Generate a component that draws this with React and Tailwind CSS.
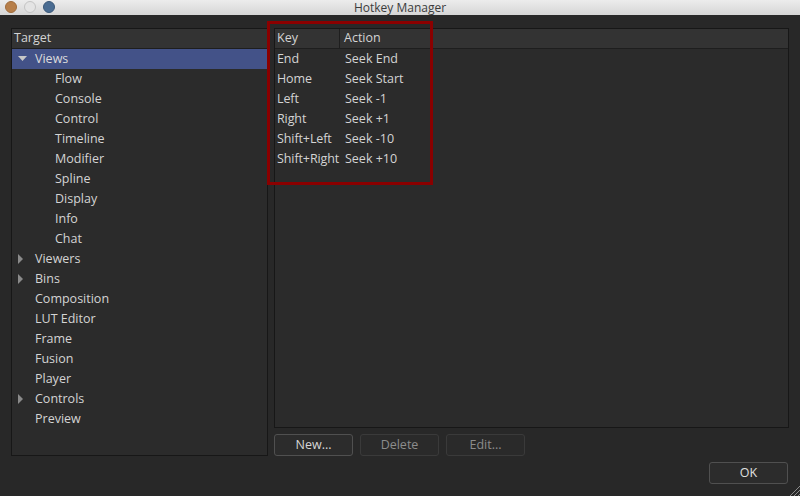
const views = ["Flow", "Console", "Control", "Timeline", "Modifier", "Spline", "Display", "Info", "Chat"];
const others = [
  { name: "Viewers", kids: true },
  { name: "Bins", kids: true },
  { name: "Composition" },
  { name: "LUT Editor" },
  { name: "Frame" },
  { name: "Fusion" },
  { name: "Player" },
  { name: "Controls", kids: true },
  { name: "Preview" },
];
const hotkeys = [
  ["End", "Seek End"],
  ["Home", "Seek Start"],
  ["Left", "Seek -1"],
  ["Right", "Seek +1"],
  ["Shift+Left", "Seek -10"],
  ["Shift+Right", "Seek +10"],
];

function Arrow({ open }) {
  if (open)
    return (
      <svg width="9" height="6" viewBox="0 0 9 6" className="shrink-0">
        <path d="M0 0 L9 0 L4.5 5 Z" fill="#c8c8c8" />
      </svg>
    );
  return (
    <svg width="6" height="10" viewBox="0 0 6 10" className="shrink-0">
      <path d="M0 0 L5 5 L0 10 Z" fill="#8a8a8a" />
    </svg>
  );
}

export default function App() {
  return (
    <div
      className="w-[800px] h-[496px] flex flex-col bg-[#282828] text-[12.5px] text-[#d4d4d4] overflow-hidden"
      style={{ fontFamily: '"Open Sans", "Noto Sans", sans-serif' }}
    >
      {/* title bar */}
      <div className="relative h-[15px] shrink-0 bg-gradient-to-b from-[#ececec] to-[#d6d6d6] flex items-center justify-center">
        <div className="absolute left-[5px] top-[1px] flex gap-[7px]">
          <span className="w-[12px] h-[12px] rounded-full bg-[#b77f4a] border border-[#a06c3c]" />
          <span className="w-[12px] h-[12px] rounded-full bg-[#e4e4e4] border border-[#c4c4c4]" />
          <span className="w-[12px] h-[12px] rounded-full bg-[#4a6c92] border border-[#3b5878]" />
        </div>
        <span className="text-[12px] leading-none text-[#3c3c3c]">Hotkey Manager</span>
      </div>

      {/* body */}
      <div className="flex-1 flex flex-col pt-[13px] px-[11px] pb-[11px]">
        <div className="flex gap-[6px] h-[428px]">
          {/* tree */}
          <div className="w-[257px] border border-[#171717] bg-[#2b2b2b] flex flex-col">
            <div className="h-[20px] flex items-center px-[2px] bg-[#333333] border-b border-[#1e1e1e]">Target</div>
            <div className="h-[20px] flex items-center bg-[#435288] text-[#dcdcdc]">
              <div className="w-[18px] flex justify-end pr-[3px]">
                <Arrow open />
              </div>
              <span className="pl-[5px]">Views</span>
            </div>
            {views.map((v) => (
              <div key={v} className="h-[20px] flex items-center pl-[43px]">
                {v}
              </div>
            ))}
            {others.map((o) => (
              <div key={o.name} className="h-[20px] flex items-center">
                <div className="w-[23px] flex justify-start pl-[6px]">{o.kids && <Arrow />}</div>
                <span>{o.name}</span>
              </div>
            ))}
          </div>

          {/* hotkey list */}
          <div className="flex-1 flex flex-col gap-[6px]">
            <div className="relative flex-1 border border-[#171717] bg-[#2b2b2b]">
              <div className="flex h-[20px] bg-[#333333] border-b border-[#1e1e1e]">
                <div className="w-[65px] border-r border-[#1e1e1e] flex items-center px-[2px]">Key</div>
                <div className="flex items-center px-[4px]">Action</div>
              </div>
              {hotkeys.map(([k, a]) => (
                <div key={k} className="flex h-[20px] items-center">
                  <span className="w-[67px] px-[2px] tracking-[-0.1px]">{k}</span>
                  <span className="px-[3px]">{a}</span>
                </div>
              ))}
              <div className="absolute left-[-8px] top-[-8px] w-[166px] h-[164px] border-[3px] border-[#8a0000]" />
            </div>
            <div className="flex gap-[7px] h-[22px] shrink-0">
              <button className="w-[79px] rounded-[3px] border border-[#505050] bg-[#2c2c2c] text-[#d6d6d6]">New...</button>
              <button className="w-[79px] rounded-[3px] border border-[#3a3a3a] bg-[#2a2a2a] text-[#8c8c8c]">Delete</button>
              <button className="w-[79px] rounded-[3px] border border-[#3a3a3a] bg-[#2a2a2a] text-[#8c8c8c]">Edit...</button>
            </div>
          </div>
        </div>

        <div className="flex justify-end mt-[6px] pr-[1px]">
          <button className="w-[79px] h-[22px] rounded-[3px] border border-[#505050] bg-[#2c2c2c] text-[#e0e0e0]">OK</button>
        </div>
      </div>

      <svg className="absolute left-[786px] top-[482px]" width="14" height="14" viewBox="0 0 14 14">
        <path d="M14 4 L4 14 M14 8 L8 14 M14 12 L12 14" stroke="#8a8a8a" strokeWidth="1" />
      </svg>
    </div>
  );
}
